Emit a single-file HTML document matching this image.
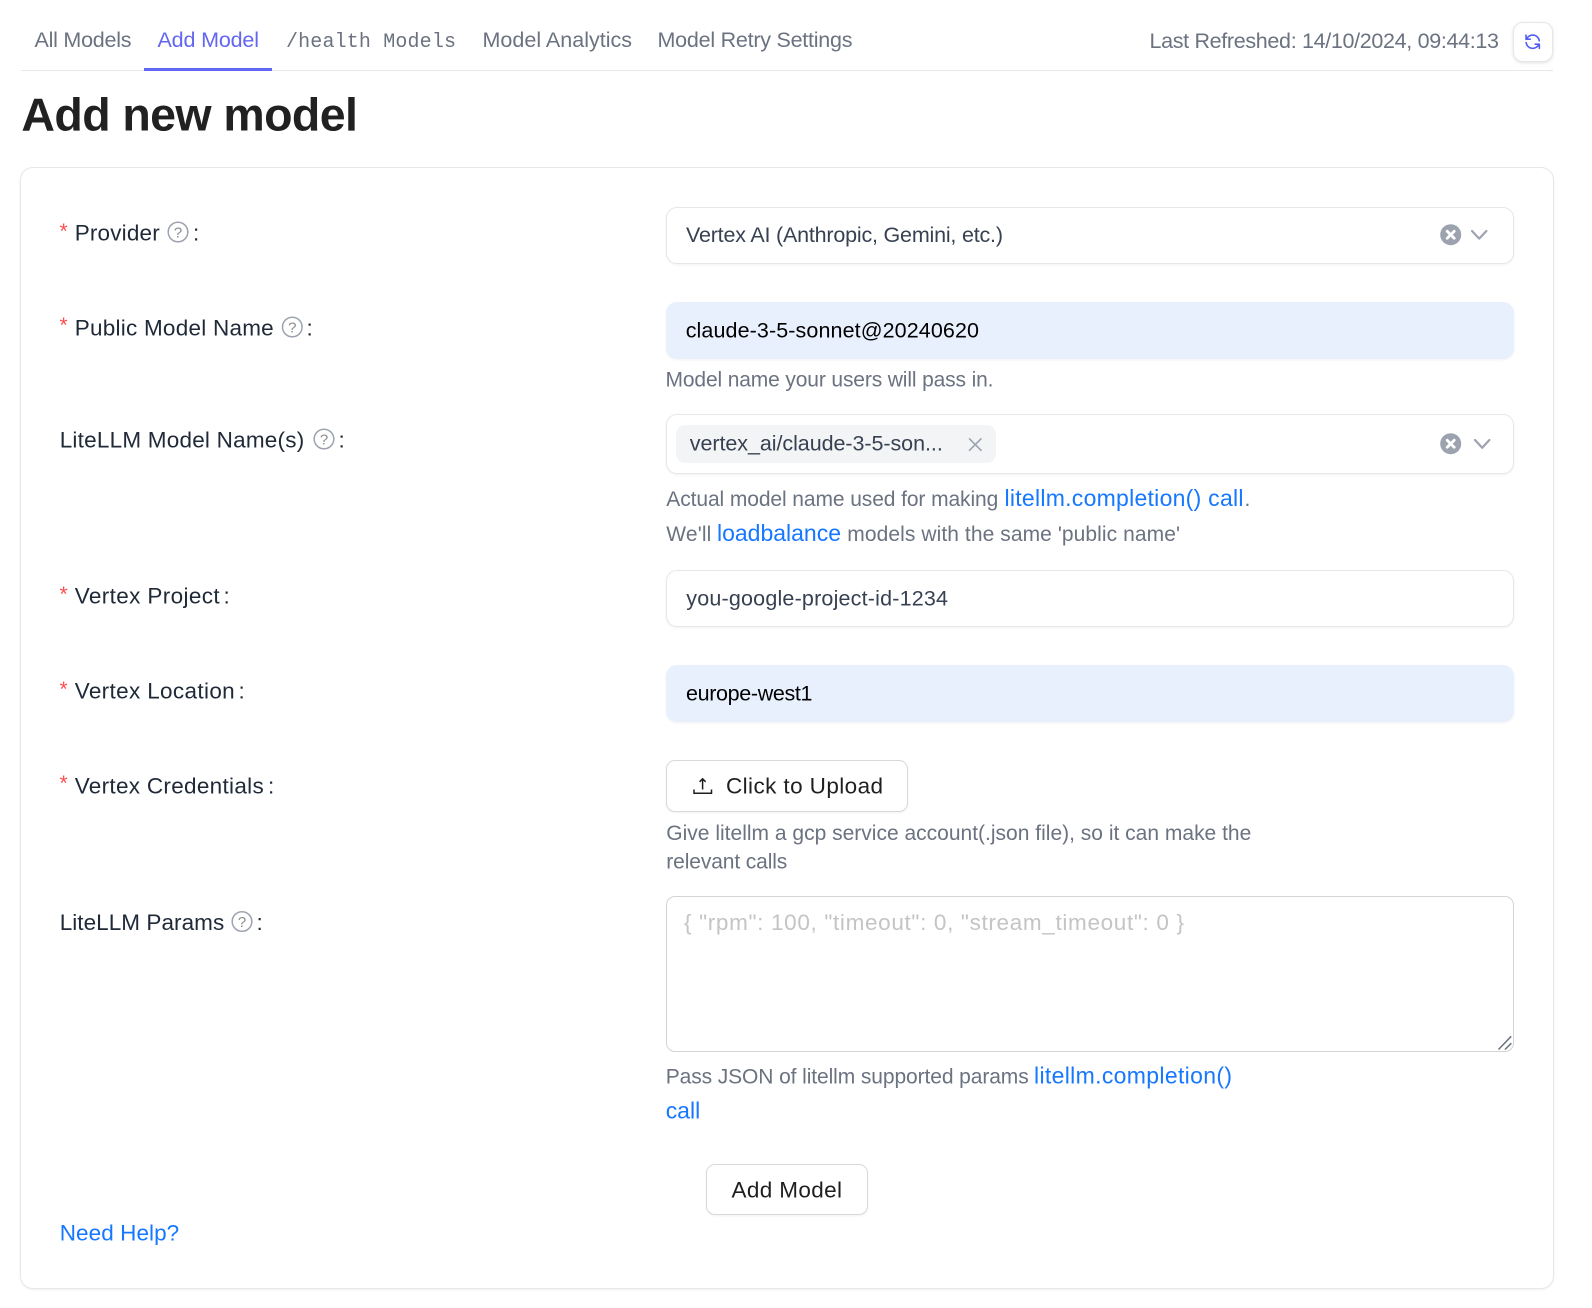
<!DOCTYPE html>
<html lang="en">
<head>
<meta charset="utf-8">
<title>Add new model</title>
<style>
html,body{margin:0;padding:0;background:#fff;width:1592px;height:1308px;overflow:hidden}
.b{position:absolute;box-sizing:border-box;background:#fff;border:1px solid #e5e7eb;box-shadow:0 1px 2px rgba(0,0,0,.06)}
svg{position:absolute;left:0;top:0}
text{font-family:"Liberation Sans",sans-serif;white-space:pre}
.tab{font-size:21.5px;fill:#6b7280}
.lab{font-size:22.5px;fill:#1f2937}
.val{font-size:21.5px;fill:#374151}
.hlp{font-size:21px;fill:#6b7280}
.lnk{font-size:23px;fill:#1677ff}
.q{font-size:15px;fill:#8c8c8c;text-anchor:middle}
.st{font-size:21px;fill:#ff4d4f}
</style>
</head>
<body>
<div style="position:absolute;left:21px;top:70px;width:1532px;height:1px;background:#e5e7eb"></div>
<div style="position:absolute;left:144px;top:68px;width:128px;height:3px;background:#6366f1"></div>
<div class="b" style="left:1512.5px;top:21.5px;width:40px;height:40px;border-radius:10px;box-shadow:0 1px 3px rgba(0,0,0,.12)"></div>
<div class="b" style="left:20px;top:167px;width:1534px;height:1122px;border-radius:13px"></div>
<div class="b" style="left:666px;top:207px;width:848px;height:57px;border-radius:11px"></div>
<div class="b" style="left:666px;top:302px;width:848px;height:57px;border-radius:11px;background:#e8f0fe;border-color:#e8f0fe"></div>
<div class="b" style="left:666px;top:414px;width:848px;height:60px;border-radius:11px"></div>
<div style="position:absolute;left:676px;top:425px;width:320px;height:38px;border-radius:9px;background:#f3f4f6"></div>
<div class="b" style="left:666px;top:570px;width:848px;height:57px;border-radius:11px"></div>
<div class="b" style="left:666px;top:665px;width:848px;height:57px;border-radius:11px;background:#e8f0fe;border-color:#e8f0fe"></div>
<div class="b" style="left:666px;top:760px;width:242px;height:52px;border-radius:9px;border-color:#d9d9d9"></div>
<div class="b" style="left:666px;top:896px;width:848px;height:156px;border-radius:9px;border-color:#d4d4d4;box-shadow:none"></div>
<div class="b" style="left:706px;top:1164px;width:162px;height:51px;border-radius:9px;border-color:#d9d9d9"></div>

<svg width="1592" height="1308" viewBox="0 0 1592 1308" xmlns="http://www.w3.org/2000/svg">
<!-- tabs -->
<text class="tab" x="34.5" y="47" textLength="97">All Models</text>
<text class="tab" x="157.5" y="47" textLength="101.5" style="fill:#6366f1">Add Model</text>
<text class="tab" x="286" y="47" textLength="170" style="font-family:'Liberation Mono',monospace;font-size:20px">/health Models</text>
<text class="tab" x="482.5" y="47" textLength="149.5">Model Analytics</text>
<text class="tab" x="657.5" y="47" textLength="195">Model Retry Settings</text>
<text class="tab" x="1149.5" y="48" textLength="349.5">Last Refreshed: 14/10/2024, 09:44:13</text>
<svg x="1522.7" y="31.7" width="20" height="20" viewBox="0 0 24 24" fill="none" stroke="#4f5df5" stroke-width="1.9" stroke-linecap="round" stroke-linejoin="round"><path d="M4 4v5h.582m15.356 2A8.001 8.001 0 004.582 9m0 0H9m11 11v-5h-.581m0 0a8.003 8.003 0 01-15.357-2m15.357 2H15"/></svg>

<!-- heading -->
<text x="21.4" y="130.7" textLength="336.5" style="font-size:46.5px;font-weight:700;fill:#212121">Add new model</text>

<!-- labels -->
<text class="st" x="59.5" y="238">*</text>
<text class="lab" x="74.7" y="240.7" textLength="85">Provider</text>
<circle cx="178" cy="232" r="9.8" fill="none" stroke="#9ca3af" stroke-width="1.5"/><text class="q" x="178" y="237.3">?</text>
<text class="lab" x="193" y="240.7">:</text>

<text class="st" x="59.5" y="332">*</text>
<text class="lab" x="74.7" y="335.7" textLength="199">Public Model Name</text>
<circle cx="292.3" cy="327" r="9.8" fill="none" stroke="#9ca3af" stroke-width="1.5"/><text class="q" x="292.3" y="332.3">?</text>
<text class="lab" x="306.5" y="335.7">:</text>

<text class="lab" x="59.7" y="447.7" textLength="244.5">LiteLLM Model Name(s)</text>
<circle cx="324" cy="439" r="9.8" fill="none" stroke="#9ca3af" stroke-width="1.5"/><text class="q" x="324" y="444.3">?</text>
<text class="lab" x="338.5" y="447.7">:</text>

<text class="st" x="59.5" y="601">*</text>
<text class="lab" x="74.7" y="603.7" textLength="145">Vertex Project</text>
<text class="lab" x="223.5" y="603.7">:</text>

<text class="st" x="59.5" y="696">*</text>
<text class="lab" x="74.7" y="698.5" textLength="160">Vertex Location</text>
<text class="lab" x="238.5" y="698.5">:</text>

<text class="st" x="59.5" y="790">*</text>
<text class="lab" x="74.7" y="793.5" textLength="189">Vertex Credentials</text>
<text class="lab" x="268" y="793.5">:</text>

<text class="lab" x="59.7" y="930" textLength="164.5">LiteLLM Params</text>
<circle cx="242" cy="921.5" r="9.8" fill="none" stroke="#9ca3af" stroke-width="1.5"/><text class="q" x="242" y="926.8">?</text>
<text class="lab" x="256.5" y="930">:</text>

<text class="lnk" x="59.7" y="1240.7" textLength="119.5" style="font-size:22.5px">Need Help?</text>

<!-- provider -->
<text class="val" x="686" y="242" textLength="317">Vertex AI (Anthropic, Gemini, etc.)</text>
<circle cx="1450.7" cy="234.7" r="10.5" fill="#9ca3af"/>
<path d="M1447.2 231.2l7 7m0-7l-7 7" stroke="#fff" stroke-width="2.8" stroke-linecap="round"/>
<path d="M1472 231l7.2 7.6 7.2-7.6" fill="none" stroke="#9ca3af" stroke-width="2.2" stroke-linecap="round" stroke-linejoin="round"/>

<!-- public name -->
<text class="val" x="685.7" y="337.7" textLength="293.3" style="fill:#000">claude-3-5-sonnet@20240620</text>
<text class="hlp" x="665.5" y="386.5" textLength="328">Model name your users will pass in.</text>

<!-- litellm name -->
<text class="val" x="689.8" y="450.7" textLength="253">vertex_ai/claude-3-5-son...</text>
<path d="M969.5 438.8l11.5 11.5m0-11.5l-11.5 11.5" stroke="#9ca3af" stroke-width="1.6" stroke-linecap="round"/>
<circle cx="1450.7" cy="443.7" r="10.5" fill="#9ca3af"/>
<path d="M1447.2 440.2l7 7m0-7l-7 7" stroke="#fff" stroke-width="2.8" stroke-linecap="round"/>
<path d="M1475 440l7.2 7.8 7.2-7.8" fill="none" stroke="#9ca3af" stroke-width="2.2" stroke-linecap="round" stroke-linejoin="round"/>
<text class="hlp" x="666.3" y="506" textLength="332">Actual model name used for making</text>
<text class="lnk" x="1004.5" y="506" textLength="239">litellm.completion() call</text>
<text class="hlp" x="1244.5" y="506">.</text>
<text class="hlp" x="666.3" y="541" textLength="45">We'll</text>
<text class="lnk" x="717" y="541" textLength="124">loadbalance</text>
<text class="hlp" x="847.3" y="541" textLength="332.7">models with the same 'public name'</text>

<!-- vertex project / location -->
<text class="val" x="686.3" y="605.3" textLength="261.7">you-google-project-id-1234</text>
<text class="val" x="686" y="700.7" textLength="126.5" style="fill:#000">europe-west1</text>

<!-- upload -->
<path d="M702.6 789.5V779M699.6 781.8l3-3 3 3M694 789.5v3.8h17.5v-3.8" fill="none" stroke="#1f1f1f" stroke-width="1.5"/>
<text class="lab" x="726" y="793.7" textLength="157" style="fill:#1f1f1f">Click to Upload</text>
<text class="hlp" x="666.3" y="840" textLength="585">Give litellm a gcp service account(.json file), so it can make the</text>
<text class="hlp" x="666.3" y="868.7" textLength="121">relevant calls</text>

<!-- params -->
<text x="684" y="930" textLength="500" style="font-size:22.5px;fill:#c4c4c4">{ "rpm": 100, "timeout": 0, "stream_timeout": 0 }</text>
<path d="M1498.5 1049.5l12.7-13.2M1505 1049.5l6.3-6.3" stroke="#6b7280" stroke-width="1.5" fill="none"/>
<text class="hlp" x="665.7" y="1083.5" textLength="363">Pass JSON of litellm supported params</text>
<text class="lnk" x="1034" y="1083.5" textLength="198">litellm.completion()</text>
<text class="lnk" x="665.7" y="1118.5" textLength="34.5">call</text>

<!-- submit -->
<text class="lab" x="731.5" y="1197.7" textLength="110.5" style="fill:#1f1f1f">Add Model</text>
</svg>
</body>
</html>
